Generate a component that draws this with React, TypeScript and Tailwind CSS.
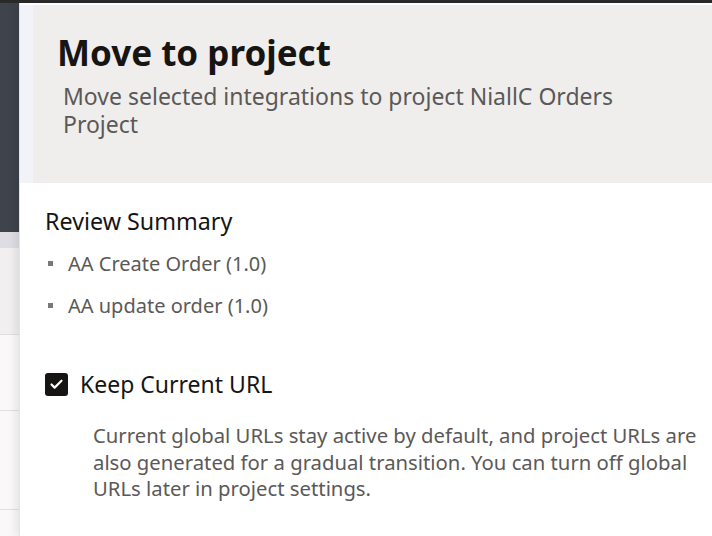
import { Check } from 'lucide-react'

const items = ['AA Create Order (1.0)', 'AA update order (1.0)']

export default function App() {
  return (
    <div
      className="flex h-[536px] w-[712px] flex-col overflow-hidden bg-white"
      style={{ fontFamily: '"Noto Sans", "Open Sans", Arial, sans-serif' }}
    >
      {/* top bar of the page behind */}
      <div className="h-[3px] w-full shrink-0 bg-[#2a2a2a]" />

      <div className="flex flex-1">
        {/* sliver of the underlying page */}
        <div className="flex w-[19px] shrink-0 flex-col">
          <div className="h-[229px] bg-[#3e434c]" />
          <div className="h-[16px] bg-[#dedde3]" />
          <div className="h-[87px] border-b border-[#e2e0df] bg-[#f1efef]" />
          <div className="h-[76px] border-b border-[#e2e0df] bg-[#faf8f8]" />
          <div className="h-[99px] border-b border-[#e2e0df] bg-[#faf8f8]" />
          <div className="flex-1 bg-[#faf8f8]" />
        </div>

        {/* drawer */}
        <div className="flex flex-1 flex-col border-l border-[#e4e4e4] bg-white shadow-[-4px_0_8px_rgba(0,0,0,0.08)]">
          <div className="h-[2px] bg-white" />
          <div className="bg-[#f2f3f8] pl-[13px]">
            <div className="h-[178px] bg-[#f0eeec] pl-[24px] pt-[26px]">
              <h1 className="text-[35px] font-bold leading-[44px] text-[#161513]">Move to project</h1>
              <p className="mt-[7px] w-[600px] pl-[6px] text-[23px] leading-[28px] text-[#5b5958]">
                Move selected integrations to project NiallC Orders Project
              </p>
            </div>
          </div>

          <div className="pl-[25px] pr-[4px] pt-[22px]">
            <h2 className="text-[23.3px] leading-[32px] text-[#161513]">Review Summary</h2>
            <ul className="mt-[12px] flex flex-col gap-[13px]">
              {items.map((item) => (
                <li key={item} className="flex items-center text-[20px] leading-[29px] text-[#5b5958]">
                  <span className="ml-[3px] mr-[15px] h-[5px] w-[5px] bg-[#7a7877]" />
                  {item}
                </li>
              ))}
            </ul>

            <label className="mt-[48px] flex items-center">
              <span className="flex h-[23px] w-[23px] items-center justify-center rounded-[3px] bg-[#161513]">
                <Check className="h-[15px] w-[15px] text-white" strokeWidth={3.5} />
              </span>
              <span className="ml-[12px] text-[23px] leading-[32px] text-[#161513]">Keep Current URL</span>
            </label>

            <p className="mt-[22px] pl-[48px] pr-[8px] text-[20.3px] leading-[26.5px] text-[#5b5958]">
              Current global URLs stay active by default, and project URLs are also generated for a gradual
              transition. You can turn off global URLs later in project settings.
            </p>
          </div>
        </div>
      </div>
    </div>
  )
}
